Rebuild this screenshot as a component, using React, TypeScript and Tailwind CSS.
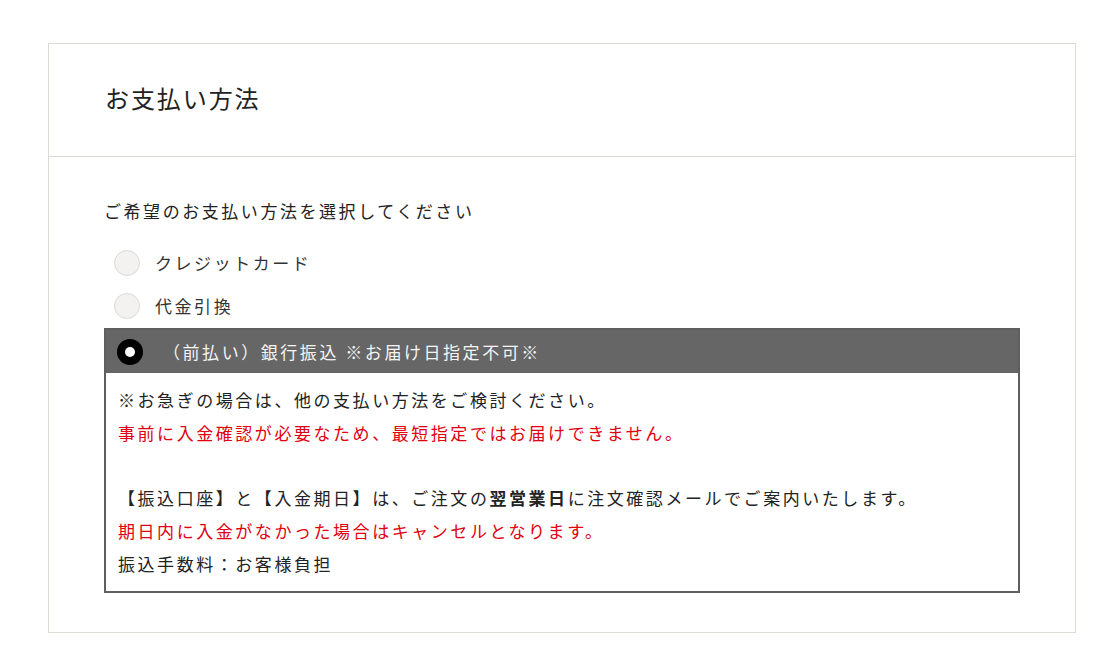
import { useState } from "react"

const methods = [
  { id: "card", label: "クレジットカード" },
  { id: "cod", label: "代金引換" },
  { id: "bank", label: "（前払い）銀行振込 ※お届け日指定不可※" },
]

export default function App() {
  const [selected, setSelected] = useState("bank")

  return (
    <div className="min-h-screen bg-white pt-[43px] pl-[48px] pr-[44px] font-['Noto_Sans_CJK_JP',sans-serif] text-[#222]">
      <div className="border border-[#dedbd6]">
        {/* 見出し */}
        <div className="flex h-[113px] items-center border-b border-[#dedbd6] pl-[56px]">
          <h2 className="font-['Liberation_Serif','Noto_Sans_CJK_JP',serif] text-[24px] font-normal tracking-[0.08em] text-[#222]">
            お支払い方法
          </h2>
        </div>

        {/* 本文 */}
        <div className="px-[55px] pt-[38px] pb-[39px] text-[17px] tracking-[0.15em]">
          <p className="leading-[32px]">ご希望のお支払い方法を選択してください</p>

          <div className="mt-[14px] flex flex-col">
            {methods.map((m) =>
              m.id === selected ? (
                <div key={m.id} className="mt-[1px] border-2 border-[#5f5f5f]">
                  <div className="flex h-[43px] items-center bg-[#666] pl-[11px]">
                    <span className="flex h-[26px] w-[26px] items-center justify-center rounded-full bg-black">
                      <span className="h-[10px] w-[10px] rounded-full bg-white" />
                    </span>
                    <span className="ml-[20px] text-[#f4f4f4]">{m.label}</span>
                  </div>
                  <div className="bg-white px-[12px] pt-[10px] pb-[11px] leading-[33px]">
                    <p>※お急ぎの場合は、他の支払い方法をご検討ください。</p>
                    <p className="text-[#e1000f]">事前に入金確認が必要なため、最短指定ではお届けできません。</p>
                    <p className="h-[32px]" />
                    <p>
                      【振込口座】と【入金期日】は、ご注文の<span className="font-bold">翌営業日</span>に注文確認メールでご案内いたします。
                    </p>
                    <p className="text-[#e1000f]">期日内に入金がなかった場合はキャンセルとなります。</p>
                    <p>振込手数料：お客様負担</p>
                  </div>
                </div>
              ) : (
                <button
                  key={m.id}
                  type="button"
                  onClick={() => setSelected(m.id)}
                  className="flex h-[43px] items-center pl-[10px] text-left"
                >
                  <span className="h-[26px] w-[26px] rounded-full border border-[#dcdad6] bg-[#f3f2f0]" />
                  <span className="ml-[15px] text-[#333]">{m.label}</span>
                </button>
              )
            )}
          </div>
        </div>
      </div>
    </div>
  )
}
